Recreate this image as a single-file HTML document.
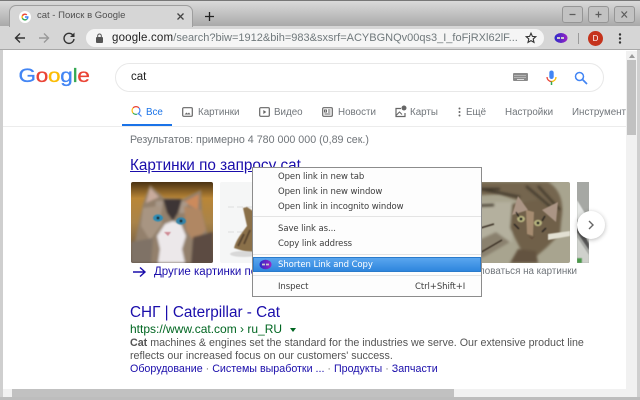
<!DOCTYPE html>
<html><head><meta charset="utf-8"><style>
html,body{margin:0;padding:0;width:640px;height:400px;overflow:hidden;background:#fff;font-family:"Liberation Sans",sans-serif}
#p{position:absolute;left:0;top:0;width:640px;height:400px;filter:blur(.3px)}
.a{position:absolute;white-space:nowrap}
.tb{font-size:9.8px;color:#70757a;top:106.500px}
.m{font-family:"DejaVu Sans",sans-serif;font-size:8.500px;letter-spacing:-.08px;color:#3c3c3c;left:278px}
.sep{left:253px;width:228px;height:1px;background:#e4e4e4;position:absolute}
.l{color:#1a0dab}
</style></head><body><div id="p">
<!-- chrome frame -->
<div class="a" style="left:0;top:0;width:640px;height:26px;background:linear-gradient(#dcdcdc,#a9a9a9)"></div>
<div class="a" style="left:0;top:26px;width:640px;height:24px;background:#d6d6d6;border-bottom:1px solid #a8a8a8;box-sizing:border-box"></div>
<div class="a" style="left:0;top:0;width:640px;height:1px;background:#777"></div>
<div class="a" style="left:9px;top:5px;width:184px;height:22px;background:#d6d6d6;border-radius:7px 7px 0 0;border:1px solid #9e9e9e;border-bottom:none;box-sizing:border-box"></div>
<svg class="a" style="left:19px;top:11px" width="12" height="12" viewBox="0 0 24 24"><circle cx="12" cy="12" r="12" fill="#fff"/><path d="M12 5a7 7 0 0 1 4.600 1.700l-2 2A4.300 4.300 0 0 0 7.900 10.500L5.600 8.700A7 7 0 0 1 12 5z" fill="#ea4335"/><path d="M5.600 8.700l2.300 1.800a4.300 4.300 0 0 0 0 3l-2.300 1.800a7 7 0 0 1 0-6.600z" fill="#fbbc05"/><path d="M5.600 15.300l2.300-1.800A4.300 4.300 0 0 0 14.500 15.500l2.200 1.700A7 7 0 0 1 5.600 15.300z" fill="#34a853"/><path d="M19 10.500v3a7 7 0 0 1-2.300 3.700l-2.200-1.700a3.500 3.500 0 0 0 1.500-2H12v-3z" fill="#4285f4"/></svg>
<div class="a" style="left:37px;top:10px;font-size:9.500px;color:#505050">cat - Поиск в Google</div>
<svg class="a" style="left:176px;top:12px" width="9" height="9" viewBox="0 0 9 9"><path d="M1.500 1.500l6 6M7.500 1.500l-6 6" stroke="#444" stroke-width="1.300"/></svg>
<svg class="a" style="left:204px;top:11px" width="11" height="11" viewBox="0 0 11 11"><path d="M5.500 1v9M1 5.500h9" stroke="#222" stroke-width="1.300"/></svg>
<!-- window buttons -->
<div class="a" style="left:562px;top:6px;width:21px;height:17px;border:1px solid #959595;border-radius:3px;box-sizing:border-box;background:#c2c2c2"></div>
<div class="a" style="left:588px;top:6px;width:21px;height:17px;border:1px solid #959595;border-radius:3px;box-sizing:border-box;background:#c2c2c2"></div>
<div class="a" style="left:614px;top:6px;width:21px;height:17px;border:1px solid #959595;border-radius:3px;box-sizing:border-box;background:#c2c2c2"></div>
<svg class="a" style="left:562px;top:6px" width="73" height="17" viewBox="0 0 73 17"><path d="M7.500 8.500h6M33.500 8.500h6M36.500 5.500v6M59.500 5.500l5.500 6M65 5.500l-5.500 6" stroke="#5c5c5c" stroke-width="1.200" fill="none"/></svg>
<!-- nav -->
<svg class="a" style="left:13px;top:31px" width="70" height="14" viewBox="0 0 70 14"><path d="M12 7H3M7 2.500L2.500 7 7 11.500" stroke="#333" stroke-width="1.400" fill="none"/><path d="M26 7h9M31 2.500L35.500 7 31 11.500" stroke="#999" stroke-width="1.400" fill="none"/><path d="M60 4.300A5 5 0 1 0 61 8" stroke="#333" stroke-width="1.400" fill="none"/><path d="M61.500 1.500v4.500H57z" fill="#333"/></svg>
<div class="a" style="left:86px;top:29px;width:458px;height:18px;background:#f5f5f5;border-radius:9px"></div>
<svg class="a" style="left:95px;top:33px" width="9" height="10" viewBox="0 0 9 10"><rect x="1" y="4" width="7" height="6" rx="1" fill="#555"/><path d="M2.700 4V2.800a1.800 1.800 0 0 1 3.600 0V4" stroke="#555" fill="none"/></svg>
<div class="a" style="left:112px;top:31.500px;font-size:11.500px;color:#222;letter-spacing:.18px">google.com<span style="color:#70797c;font-size:11px;letter-spacing:0">/search?biw=1912&amp;bih=983&amp;sxsrf=ACYBGNQv00qs3_I_foFjRXl62lF...</span></div>
<svg class="a" style="left:525px;top:32px" width="12" height="12" viewBox="0 0 12 12"><path d="M6 1.200l1.400 3.200 3.400.3-2.600 2.300.8 3.400L6 8.600l-3 1.800.8-3.400L1.200 4.700l3.400-.3z" fill="none" stroke="#333" stroke-width="1.100"/></svg>
<svg class="a" style="left:554px;top:31px" width="14" height="14" viewBox="0 0 14 14"><defs><linearGradient id="g" x1="0" x2="1"><stop offset="0" stop-color="#2b2bc9"/><stop offset="1" stop-color="#9a22c4"/></linearGradient></defs><ellipse cx="7" cy="7" rx="6.500" ry="5" fill="url(#g)"/><path d="M3 7h8" stroke="#ccc" stroke-width="2" stroke-dasharray="3 1"/></svg>
<div class="a" style="left:578px;top:33px;width:1px;height:11px;background:#9a9a9a"></div>
<div class="a" style="left:588px;top:31px;width:15px;height:15px;border-radius:50%;background:#c5331c;color:#fff;font-size:8px;line-height:15px;text-align:center">D</div>
<svg class="a" style="left:618px;top:33px" width="4" height="11"><circle cx="2" cy="1.500" r="1.200" fill="#333"/><circle cx="2" cy="5.500" r="1.200" fill="#333"/><circle cx="2" cy="9.500" r="1.200" fill="#333"/></svg>
<!-- page edge and scrollbars -->
<div class="a" style="left:0;top:50px;width:3px;height:350px;background:#cfcfcf"></div>
<div class="a" style="left:626px;top:51px;width:11px;height:338px;background:#f1f1f1"></div>
<div class="a" style="left:627px;top:60px;width:9px;height:75px;background:#c1c1c1"></div>
<div class="a" style="left:629px;top:54px;width:0;height:0;border:3px solid transparent;border-bottom:4px solid #9a9a9a;border-top:0"></div>
<div class="a" style="left:637px;top:50px;width:3px;height:350px;background:#cfcfcf"></div>
<div class="a" style="left:3px;top:389px;width:634px;height:8px;background:#f1f1f1"></div>
<div class="a" style="left:12px;top:389px;width:442px;height:8px;background:#c1c1c1"></div>
<div class="a" style="left:0;top:397px;width:640px;height:3px;background:#bdbdbd"></div>
<!-- google logo -->
<div class="a" style="left:18.500px;top:60px;font-size:22.500px;letter-spacing:-.25px;line-height:30px;-webkit-text-stroke:.35px;transform:scaleY(.86);transform-origin:0 22px"><span style="color:#4285f4">G</span><span style="color:#ea4335">o</span><span style="color:#fbbc05">o</span><span style="color:#4285f4">g</span><span style="color:#34a853">l</span><span style="color:#ea4335">e</span></div>
<!-- search box -->
<div class="a" style="left:115px;top:63px;width:489px;height:29px;border:1px solid #e8e8e8;border-radius:15px;box-sizing:border-box;background:#fff"></div>
<div class="a" style="left:131px;top:70.500px;font-size:11.500px;color:#222">cat</div>
<svg class="a" style="left:513px;top:73px" width="16" height="9" viewBox="0 0 16 9"><rect width="15" height="8" rx="1" fill="#8a8a8a"/><path d="M1.500 2.500h12M1.500 4.500h12" stroke="#ddd" stroke-dasharray="1 1"/><path d="M4 6.500h7" stroke="#ddd"/></svg>
<svg class="a" style="left:545px;top:70px" width="13" height="15" viewBox="0 0 13 15"><rect x="4.300" y="0.500" width="4.400" height="8.500" rx="2.200" fill="#4285f4"/><path d="M2 7a4.500 4.500 0 0 0 4.500 4.500" stroke="#ea4335" stroke-width="1.300" fill="none"/><path d="M11 7a4.500 4.500 0 0 1-4.500 4.500" stroke="#fbbc05" stroke-width="1.300" fill="none"/><path d="M6.500 11.500V15" stroke="#34a853" stroke-width="1.500"/></svg>
<svg class="a" style="left:574px;top:71px" width="14" height="14" viewBox="0 0 14 14"><circle cx="5.500" cy="5.500" r="4" stroke="#4285f4" stroke-width="1.500" fill="none"/><path d="M8.500 8.500l4.500 4.500" stroke="#4285f4" stroke-width="1.700"/></svg>
<!-- tabs -->
<svg class="a" style="left:131px;top:106px" width="11" height="11" viewBox="0 0 11 11"><path d="M8 2A4 4 0 0 0 2 2" stroke="#ea4335" stroke-width="1.200" fill="none"/><path d="M2 2A4 4 0 0 0 2 7" stroke="#fbbc05" stroke-width="1.200" fill="none"/><path d="M2 7A4 4 0 0 0 6 8.200" stroke="#34a853" stroke-width="1.200" fill="none"/><path d="M6.500 8.200A4 4 0 0 0 8 2M7 7l3.500 3.500" stroke="#4285f4" stroke-width="1.200" fill="none"/></svg>
<div class="a tb" style="left:146px;color:#1a73e8">Все</div>
<div class="a" style="left:122px;top:124px;width:50px;height:2px;background:#1a73e8"></div>
<div class="a" style="left:3px;top:126px;width:623px;height:1px;background:#ececec"></div>
<svg class="a" style="left:182px;top:107px" width="11" height="10" viewBox="0 0 11 10"><rect x=".7" y=".7" width="9.600" height="8.600" rx="1" stroke="#666" stroke-width="1.200" fill="none"/><path d="M2.500 7.500l2-2 1.200 1.200L7 5.500l1.500 2z" fill="#666"/></svg>
<div class="a tb" style="left:198px">Картинки</div>
<svg class="a" style="left:259px;top:107px" width="11" height="10" viewBox="0 0 11 10"><rect x=".7" y=".7" width="9.600" height="8.600" rx="1" stroke="#666" stroke-width="1.200" fill="none"/><path d="M4.300 3l3 2-3 2z" fill="#666"/></svg>
<div class="a tb" style="left:274px">Видео</div>
<svg class="a" style="left:322px;top:107px" width="11" height="10" viewBox="0 0 11 10"><rect x=".7" y=".7" width="9.600" height="8.600" rx="1" stroke="#666" stroke-width="1.200" fill="none"/><path d="M2.500 3h2v2h-2zM6 3h2.500M6 5h2.500M2.500 7h6" stroke="#666" fill="none"/></svg>
<div class="a tb" style="left:338px">Новости</div>
<svg class="a" style="left:395px;top:105px" width="12" height="13" viewBox="0 0 12 13"><path d="M6 3.500H1v8h9V8" stroke="#666" stroke-width="1.200" fill="none"/><path d="M1 10.500L4.500 7 7 9.500" stroke="#666" fill="none"/><circle cx="9" cy="3" r="2.500" fill="#666"/></svg>
<div class="a tb" style="left:410px">Карты</div>
<svg class="a" style="left:458px;top:107px" width="3" height="10"><circle cx="1.500" cy="1.500" r="1" fill="#666"/><circle cx="1.500" cy="5" r="1" fill="#666"/><circle cx="1.500" cy="8.500" r="1" fill="#666"/></svg>
<div class="a tb" style="left:466px">Ещё</div>
<div class="a tb" style="left:505px">Настройки</div>
<div class="a tb" style="left:572px;width:54px;overflow:hidden">Инструменты</div>
<div class="a" style="left:130px;top:134px;font-size:10.700px;color:#70757a">Результатов: примерно 4 780 000 000 (0,89 сек.)</div>
<!-- images heading -->
<div class="a l" style="left:130px;top:156.500px;font-size:15.300px;text-decoration:underline">Картинки по запросу cat</div>
<!-- image 1: kitten -->
<svg class="a" style="left:131px;top:182px" width="82" height="81" viewBox="0 0 82 81"><defs><linearGradient id="bg" x1="0" x2="0" y1="0" y2="1"><stop offset="0" stop-color="#4a3212"/><stop offset=".2" stop-color="#b98637"/><stop offset=".5" stop-color="#a98349"/><stop offset="1" stop-color="#5a4c42"/></linearGradient><filter id="b" x="-10%" y="-10%" width="120%" height="120%"><feGaussianBlur stdDeviation="1.200"/></filter><filter id="b2"><feGaussianBlur stdDeviation=".6"/></filter><clipPath id="c1"><rect width="82" height="81" rx="2"/></clipPath></defs><g clip-path="url(#c1)"><rect width="82" height="81" fill="url(#bg)"/><g filter="url(#b)"><path d="M12 22L19 3 33 16 52 17 70 8 71 30 76 50 78 81 0 81 6 50z" fill="#93806c"/><path d="M19 6l-4 15 13-6z" fill="#c9ab9c"/><path d="M68 12L53 20l14 8z" fill="#cc8a5c"/><path d="M32 17h19l-4 14-5 8-6-8z" fill="#3d3534"/><path d="M25 19l7 0-2 12-6 1zM51 19l6 2-4 10-5 0z" fill="#a9998a"/><path d="M34 42l8-3 8 3 5 12-4 13 3 14H27l2-14-3-13z" fill="#ecE8ea"/><path d="M53 24l17 4 5 20-12 12-8-12z" fill="#b08764"/><path d="M62 55l20-5v31H60z" fill="#5c4c42"/><path d="M12 26l17-2 2 18-12 16-9-14z" fill="#a89582"/><path d="M0 60l22-4-2 25H0z" fill="#7f7266"/></g><g filter="url(#b2)"><ellipse cx="27" cy="36" rx="5" ry="3.600" fill="#2f8cb4"/><ellipse cx="50" cy="39" rx="5" ry="3.600" fill="#3483a8"/><circle cx="27" cy="36" r="1.500" fill="#1c2a30"/><circle cx="50" cy="39" r="1.500" fill="#1c2a30"/><path d="M33 50h7l-3 4z" fill="#cf8a94"/></g></g></svg>
<!-- image 2 -->
<div class="a" style="left:220px;top:182px;width:40px;height:81px;background:#f5f6f6;border-radius:2px"></div>
<svg class="a" style="left:220px;top:182px" width="33" height="81" viewBox="0 0 33 81"><path d="M8 50h22M8 25h24" stroke="#ddd" stroke-dasharray="6 3"/><g filter="url(#b2)"><path d="M14 66c2-8 7-14 13-22l-4-18 4-1 6 4v43z" fill="#8a6f4a"/><path d="M18 64l6-12M24 62l6-14" stroke="#5a4630" stroke-width="2"/></g><ellipse cx="24" cy="72" rx="14" ry="3" fill="#d8d8d8" filter="url(#b2)"/></svg>
<!-- image 3: tabby -->
<svg class="a" style="left:470px;top:182px" width="100" height="81" viewBox="0 0 100 81"><defs><clipPath id="c3"><rect width="100" height="81" rx="2"/></clipPath></defs><g clip-path="url(#c3)"><rect width="100" height="81" fill="#a8a48f"/><g filter="url(#b)"><path d="M0 20H42V60L0 68z" fill="#b4b09e"/><path d="M0 0H78C92 8 95 25 90 42L76 52 52 20 30 12 0 14z" fill="#74664f"/><path d="M42 22l26-4 24 12-2 22-14 14-14 12-12-12-10-20z" fill="#6f6049"/><path d="M0 62l26-12 14 10-24 14-16 6z" fill="#8a816e"/><path d="M40 81l8-14 18 2 2 12z" fill="#64523f"/></g><g filter="url(#b)"><path d="M10 7l40 8M0 7h30M0 24l24-1M56 4l26 22M68 4l22 24" stroke="#40372a" stroke-width="2.200" fill="none"/></g><g filter="url(#b2)"><path d="M42 33L48 14l10 14zM72 28l16-8-2 20z" fill="#ab9585"/><path d="M78 52l22-3v5l-22 4z" fill="#e2e0d2"/><path d="M4 48l20-6M8 72l24-14" stroke="#3c3328" stroke-width="1.500"/><ellipse cx="51" cy="37" rx="4" ry="3.200" fill="#b6b27e"/><ellipse cx="68" cy="41" rx="4" ry="3.200" fill="#b6b27e"/><circle cx="51" cy="37" r="1.500" fill="#222"/><circle cx="68" cy="41" r="1.500" fill="#222"/><path d="M56 28l1 24 6 2 1-24z" fill="#a58b70"/><path d="M46 30l3 5M75 34l-3 5M44 42l5 5M76 46l-4 4" stroke="#2c2620" stroke-width="1.400"/><path d="M58 54l4 2 3-2-3 3z" fill="#5a4030"/></g></g></svg>
<!-- image 4 -->
<svg class="a" style="left:577px;top:182px" width="12" height="81" viewBox="0 0 12 81"><rect width="12" height="81" fill="#a6a8a4"/><g filter="url(#b2)"><path d="M0 18L12 38V60L0 36z" fill="#e4e6e4"/><path d="M0 38L12 62V68L0 50z" fill="#555"/><path d="M0 55l12 18v8H0z" fill="#cfd1cc"/><rect x="0" y="76" width="5" height="5" fill="#4c9a4c"/></g></svg>
<!-- next button -->
<div class="a" style="left:577px;top:211px;width:28px;height:28px;border-radius:50%;background:#fff;box-shadow:0 1px 5px rgba(0,0,0,.28)"></div>
<svg class="a" style="left:586px;top:219px" width="10" height="12" viewBox="0 0 10 12"><path d="M3 2l4 4-4 4" stroke="#666" stroke-width="1.400" fill="none"/></svg>
<!-- below images -->
<svg class="a" style="left:132px;top:266px" width="15" height="12" viewBox="0 0 15 12"><path d="M1 6h12M8 1.500L13 6l-5 4.500" stroke="#1a0dab" stroke-width="1.400" fill="none"/></svg>
<div class="a l" style="left:154px;top:265.500px;font-size:11.500px">Другие картинки по запросу cat</div>
<div class="a" style="right:63px;top:265.500px;font-size:9.800px;color:#70757a">Пожаловаться на картинки</div>
<!-- context menu -->
<div class="a" style="left:252px;top:166.500px;width:230px;height:130px;background:#fdfdfd;border:1px solid #8c8c8c;box-sizing:border-box"></div>
<div class="a m" style="top:171.500px">Open link in new tab</div>
<div class="a m" style="top:186.500px">Open link in new window</div>
<div class="a m" style="top:201.500px">Open link in incognito window</div>
<div class="sep" style="top:216px"></div>
<div class="a m" style="top:223.500px">Save link as...</div>
<div class="a m" style="top:238.500px">Copy link address</div>
<div class="sep" style="top:254px"></div>
<div class="a" style="left:253px;top:257px;width:228px;height:15px;background:linear-gradient(#5aa6ee,#2f86dd);border:1px solid #2a7bcb;box-sizing:border-box"></div>
<svg class="a" style="left:259px;top:259px" width="13" height="11" viewBox="0 0 13 11"><ellipse cx="6.500" cy="5.500" rx="6" ry="4.800" fill="url(#g)"/><path d="M3 5.500h7" stroke="#ccc" stroke-width="1.800" stroke-dasharray="3 1"/></svg>
<div class="a m" style="top:259.500px;color:#fff">Shorten Link and Copy</div>
<div class="sep" style="top:275px"></div>
<div class="a m" style="top:281.500px">Inspect</div>
<div class="a m" style="top:281.500px;left:415px">Ctrl+Shift+I</div>
<!-- result -->
<div class="a l" style="left:130px;top:303.500px;font-size:15.300px">СНГ | Caterpillar - Cat</div>
<div class="a" style="left:130px;top:321.500px;font-size:12px;color:#006621">https://www.cat.com › ru_RU</div>
<div class="a" style="left:290px;top:328px;width:0;height:0;border:3px solid transparent;border-top:4px solid #006621;border-bottom:0"></div>
<div class="a" style="left:130px;top:336.500px;font-size:10.700px;color:#545454"><b>Cat</b> machines &amp; engines set the standard for the industries we serve. Our extensive product line</div>
<div class="a" style="left:130px;top:349.500px;font-size:10.700px;color:#545454">reflects our increased focus on our customers' success.</div>
<div class="a l" style="left:130px;top:362.500px;font-size:10.700px">Оборудование <span style="color:#777">·</span> Системы выработки ... <span style="color:#777">·</span> Продукты <span style="color:#777">·</span> Запчасти</div>
</div></body></html>
